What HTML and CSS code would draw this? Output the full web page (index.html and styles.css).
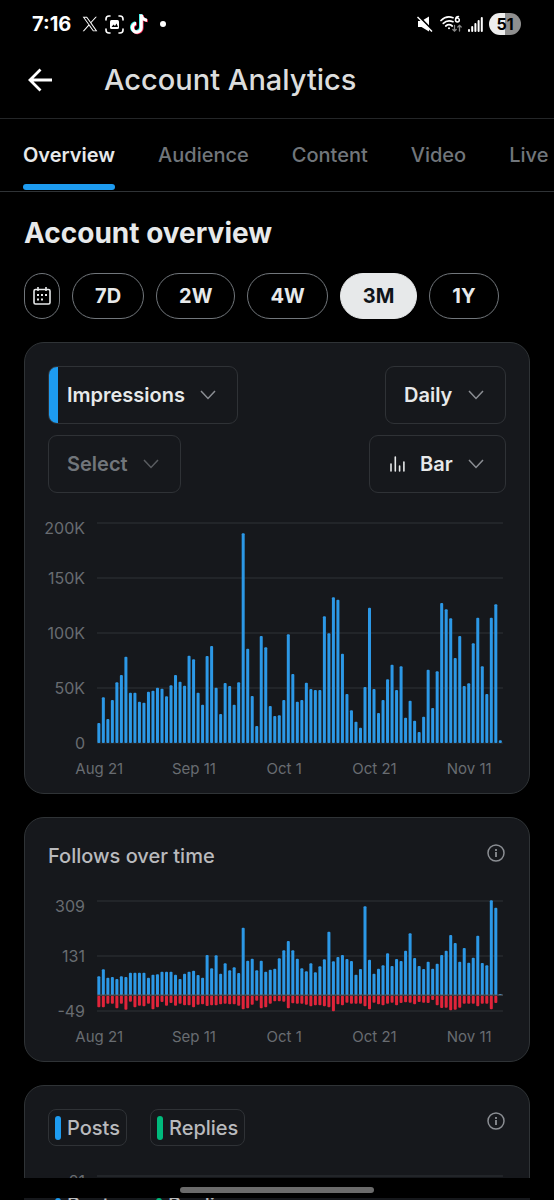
FILE: index.html
```html
<!DOCTYPE html>
<html lang="en">
<head>
<meta charset="utf-8">
<meta name="viewport" content="width=device-width, initial-scale=1">
<title>Account Analytics</title>
<link rel="stylesheet" href="styles.css">
</head>
<body>
<div class="status">
  <span class="clock">7:16</span>
  <svg class="status-x" width="16" height="16" viewBox="0 0 24 24" fill="#fff"><path d="M14.1 10.3 22.3 1h-2l-7.100 8.100L7.500 1H1l8.600 12.200L1 23h2l7.500-8.500 6 8.500H23zM11.400 13.300l-.9-1.200L3.700 2.500h3l5.600 7.800.9 1.200 7.200 10.100h-3z"/></svg>
  <svg class="status-shot" width="19" height="19" viewBox="0 0 19 19" fill="none" stroke="#fff" stroke-width="1.600" stroke-linecap="round"><path d="M1 5V4a3 3 0 0 1 3-3h1M14 1h1a3 3 0 0 1 3 3v1M18 14v1a3 3 0 0 1-3 3h-1M5 18H4a3 3 0 0 1-3-3v-1"/><rect x="5" y="5" width="9" height="9" rx="1.500" fill="#fff" stroke="none"/><path d="M6.500 12 8.500 9.500l1.500 1.500 1.500-2.500 1.500 3.500z" fill="#000" stroke="none"/></svg>
  <svg class="status-tt" width="18" height="21" viewBox="0 0 18 21"><path fill="#25f4ee" d="M9 0h3c.2 2.500 1.700 4 4.200 4.200v3C14.500 7.200 13 6.600 12 5.800v7.400a6 6 0 1 1-6.800-6v3.200a2.900 2.900 0 1 0 3.800 2.800z"/><path fill="#fe2c55" d="M10.600 1h3c.2 2.500 1.700 4 4.200 4.200v3c-1.700 0-3.200-.6-4.200-1.400v7.400a6 6 0 1 1-6.800-6v3.200a2.900 2.900 0 1 0 3.800 2.800z"/><path fill="#fff" d="M9.800.5h3c.2 2.500 1.700 4 4.200 4.200v3c-1.700 0-3.200-.6-4.200-1.400v7.400a6 6 0 1 1-6.800-6v3.200a2.900 2.900 0 1 0 3.800 2.800z"/></svg>
  <span class="dot"></span>
  <svg class="status-mute" width="16" height="16" viewBox="0 0 16 16"><path fill="#fff" d="M1 5h3.500L12 .500v15L4.500 11H1z"/><path d="M1.500 0 16 15" stroke="#000" stroke-width="2"/><path d="M.5 1 15 15.500" stroke="#fff" stroke-width="1.500"/></svg>
  <svg class="status-wifi" width="23" height="18" viewBox="0 0 23 18" fill="none" stroke="#fff" stroke-width="1.700" stroke-linecap="round"><path d="M1 5.500C4.500 2 9 1.300 13 2.700M3.300 8.300C6 5.800 9.500 5.300 13 6.700M5.800 11c2-1.600 4.400-1.600 6.400 0"/><circle cx="9" cy="13.200" r="1" fill="#fff" stroke="none"/><path stroke-width="1.500" d="M18.500 1.500c-2 0-3 1.500-3 3.500a1.900 1.900 0 1 0 1.900-1.900c-1 0-1.900.6-1.900 1.900"/><path stroke="#888" stroke-width="1.300" d="M14.500 10.500v5.500M12.800 14.500l1.700 1.700 1.700-1.700M19.500 16v-5.500M17.800 12l1.700-1.700 1.700 1.700"/></svg>
  <svg class="status-cell" width="15" height="15" viewBox="0 0 15 15" fill="#fff"><rect y="12" width="2" height="3" rx="1"/><rect x="3.200" y="9" width="2" height="6" rx="1"/><rect x="6.400" y="6" width="2" height="9" rx="1"/><rect x="9.600" y="3" width="2" height="12" rx="1"/><rect x="12.800" width="2" height="15" rx="1"/></svg>
  <span class="battery">51</span>
</div>

<header class="topbar">
  <button class="back" aria-label="Back"><svg width="24" height="24" viewBox="0 0 24 24" fill="none" stroke="#fff" stroke-width="2.800"><path d="M12.500 1.500 2 12l10.500 10.500M2 12h22"/></svg></button>
  <h1 class="title">Account Analytics</h1>
</header>

<nav class="tabs">
  <a class="tab active" href="#overview">Overview</a>
  <a class="tab" href="#audience">Audience</a>
  <a class="tab" href="#content">Content</a>
  <a class="tab" href="#video">Video</a>
  <a class="tab" href="#live">Live</a>
</nav>

<main class="content" id="overview">
  <h2 class="heading">Account overview</h2>
  <div class="ranges">
    <button class="pill date" aria-label="Pick dates"><svg width="18" height="18" viewBox="0 0 18 18" fill="none" stroke="#e7e9ea" stroke-width="1.600"><rect x="1" y="2.500" width="16" height="14.500" rx="1.500"/><path d="M5 0v4M13 0v4"/><g fill="#e7e9ea" stroke="none"><rect x="8" y="7" width="2" height="2"/><rect x="12" y="7" width="2" height="2"/><rect x="4" y="7" width="2" height="2"/><rect x="4" y="11.500" width="2" height="2"/><rect x="8" y="11.500" width="2" height="2"/></g></svg></button>
    <button class="pill">7D</button>
    <button class="pill">2W</button>
    <button class="pill">4W</button>
    <button class="pill selected">3M</button>
    <button class="pill">1Y</button>
  </div>

  <section class="card">
    <div class="controls">
      <label class="picker accent"><select aria-label="Primary metric"><option>Impressions</option></select><svg class="chev" width="16" height="10" viewBox="0 0 16 10"><path d="m1 1 7 7.500L15 1"/></svg></label>
      <label class="picker"><select aria-label="Interval"><option>Daily</option></select><svg class="chev" width="16" height="10" viewBox="0 0 16 10"><path d="m1 1 7 7.500L15 1"/></svg></label>
    </div>
    <div class="controls">
      <label class="picker muted"><select aria-label="Second metric"><option>Select</option></select><svg class="chev" width="16" height="10" viewBox="0 0 16 10"><path d="m1 1 7 7.500L15 1"/></svg></label>
      <label class="picker kind"><svg width="15" height="16" viewBox="0 0 15 16" stroke="#e7e9ea" stroke-width="1.600" stroke-linecap="round"><path d="M1 8v7M5.300 1v14M9.600 10v5M13.900 6v9"/></svg><select aria-label="Chart type"><option>Bar</option></select><svg class="chev" width="16" height="10" viewBox="0 0 16 10"><path d="m1 1 7 7.500L15 1"/></svg></label>
    </div>
    <div class="chart">
      <div class="yaxis"><span>200K</span><span>150K</span><span>100K</span><span>50K</span><span>0</span></div>
      <svg class="plot tall" id="impressions" viewBox="0 0 1215 660" preserveAspectRatio="none"></svg>
      <div class="xaxis"><span class="d0">Aug 21</span><span class="d21">Sep 11</span><span class="d41">Oct 1</span><span class="d61">Oct 21</span><span class="d82">Nov 11</span></div>
    </div>
  </section>

  <section class="card">
    <div class="card-head">
      <h3 class="card-title">Follows over time</h3>
      <button class="info" aria-label="About follows"><svg width="18" height="18" viewBox="0 0 18 18" fill="none" stroke="#8b8e93" stroke-width="1.500"><circle cx="9" cy="9" r="8"/><path d="M9 8v5M9 5v2" stroke-width="1.800"/></svg></button>
    </div>
    <div class="chart">
      <div class="yaxis"><span>309</span><span>131</span><span>-49</span></div>
      <svg class="plot short" id="follows" viewBox="0 0 1215 330" preserveAspectRatio="none"></svg>
      <div class="xaxis"><span class="d0">Aug 21</span><span class="d21">Sep 11</span><span class="d41">Oct 1</span><span class="d61">Oct 21</span><span class="d82">Nov 11</span></div>
    </div>
  </section>

  <section class="card">
    <div class="card-head legend">
      <span class="chip"><i class="swatch blue"></i>Posts</span>
      <span class="chip"><i class="swatch green"></i>Replies</span>
      <button class="info" aria-label="About posts and replies"><svg width="18" height="18" viewBox="0 0 18 18" fill="none" stroke="#8b8e93" stroke-width="1.500"><circle cx="9" cy="9" r="8"/><path d="M9 8v5M9 5v2" stroke-width="1.800"/></svg></button>
    </div>
    <div class="chart">
      <div class="yaxis"><span>21</span></div>
      <svg class="plot short" id="posts" viewBox="0 0 1215 330" preserveAspectRatio="none"></svg>
    </div>
  </section>
</main>

<div class="gesture"><span class="handle"></span></div>
<div class="under" aria-hidden="true">
  <div class="under-row"><i class="swatch blue"></i><span>Posts</span><i class="swatch green"></i><span>Replies</span></div>
</div>
<script src="charts.js"></script>
</body>
</html>
```
FILE: styles.css
```css
* { box-sizing: border-box; }
body {
  margin: 0;
  height: 100vh;
  display: flex;
  flex-direction: column;
  overflow: hidden;
  background: #000;
  color: #e7e9ea;
  font-family: Inter, "Liberation Sans", sans-serif;
  font-size: 20px;
}
button, select { font: inherit; color: inherit; background: none; border: 0; padding: 0; margin: 0; }
h1, h2, h3 { margin: 0; }
svg { display: block; flex: none; }

.status { flex: none; display: flex; align-items: center; height: 48px; padding: 0 33px 0 32px; }
.clock { font-size: 20px; font-weight: 700; color: #fff; margin-right: 11px; }
.status-shot { margin-left: 7px; }
.status-tt { margin-left: 6px; }
.dot { width: 6px; height: 6px; border-radius: 50%; background: #fff; margin-left: 12px; }
.status-mute { margin-left: auto; }
.status-wifi { margin-left: 7px; }
.status-cell { margin: 0 6px 0 5px; }
.battery {
  width: 32px; height: 22px; border-radius: 11px;
  background: linear-gradient(90deg, #eee 51%, #8f8f8f 51%);
  color: #000; font-size: 16px; font-weight: 700; line-height: 22px; text-align: center;
}

.topbar { flex: none; display: flex; align-items: center; height: 71px; padding: 0 28px 7px; border-bottom: 1px solid #242628; }
.back { width: 26px; height: 26px; }
.title { margin-left: 50px; font-size: 29px; font-weight: 500; color: #dcdddd; }

.tabs { flex: none; display: flex; gap: 43px; height: 73px; padding: 0 0 0 23px; border-bottom: 1px solid #2f3336; overflow: hidden; }
.tab {
  display: flex; align-items: center;
  color: #71767b; font-weight: 500; text-decoration: none; position: relative;
}
.tab.active { color: #e7e9ea; font-weight: 600; }
.tab.active::after { content: ""; position: absolute; left: 0; right: 0; bottom: 1px; height: 6px; border-radius: 3px; background: #1d9bf0; }

.content { flex: 1; min-height: 0; overflow: hidden; padding: 24px; }
.heading { font-size: 28px; font-weight: 700; line-height: 34px; }
.ranges { display: flex; gap: 12px; margin-top: 23px; }
.pill { height: 46px; padding: 0 22px; border: 1px solid #71767b; border-radius: 23px; font-weight: 700; }
.pill.date { padding: 0 8px; }
.pill.selected { background: #e7e9ea; border-color: #e7e9ea; color: #0f1419; }

.card { margin-top: 23px; padding: 23px; border: 1px solid #2f3336; border-radius: 20px; background: #16181c; }
.controls { display: flex; justify-content: space-between; margin-bottom: 11px; }
.picker {
  display: flex; align-items: center; gap: 15px; height: 58px; padding: 0 21px 0 18px;
  border: 1px solid #2f3236; border-radius: 9px; font-weight: 600;
}
.picker select { appearance: none; outline: 0; }
.picker.accent { background: linear-gradient(90deg, #1d9bf0 9px, transparent 9px); }
.picker.muted { color: #71767b; }
.picker.kind { padding-left: 20px; }
.chev { fill: none; stroke: #8b8e93; stroke-width: 1.500; }
.muted .chev { stroke: #5a5d61; }

.chart {
  display: grid; grid-template-columns: 37px 1fr; column-gap: 12px;
  margin-top: 30px; padding-right: 3px;
  font-size: 16px; color: #686c71;
}
.yaxis { display: flex; flex-direction: column; justify-content: space-between; align-items: flex-end; }
.yaxis span { height: 0; line-height: 0; }
.yaxis span:first-child { line-height: 10px; }
.plot { width: 100%; overflow: visible; }
.plot.tall { height: 220px; }
.plot.short { height: 110px; }
.grid { stroke: #2f3236; stroke-width: 1; vector-effect: non-scaling-stroke; }
.zero { stroke: #62666b; stroke-width: 1; vector-effect: non-scaling-stroke; }
.up { fill: #2c98e6; }
.down { fill: #e0243a; }
.xaxis { grid-column: 2; display: grid; grid-template-columns: repeat(90, minmax(0, 1fr)); margin-top: 16px; line-height: 20px; margin-bottom: -9px; font-size: 15px; }
.xaxis span { justify-self: center; white-space: nowrap; grid-row: 1; }
.d0 { grid-column: 1; }
.d21 { grid-column: 22; }
.d41 { grid-column: 42; }
.d61 { grid-column: 62; }
.d82 { grid-column: 83; }

.card-head { display: flex; justify-content: space-between; align-items: flex-start; }
.card-title { font-size: 20px; font-weight: 500; line-height: 30px; color: #b9babd; }
.info { height: 18px; margin: 3px 1px 0 0; }
.legend { justify-content: flex-start; gap: 23px; }
.legend .info { margin-left: auto; }
.chip {
  display: flex; align-items: center; gap: 6px; height: 37px; padding: 0 6px;
  border: 1px solid #2f3236; border-radius: 8px; font-weight: 500; color: #b9babd;
}
.swatch { width: 6px; height: 24px; border-radius: 3px; }
.blue { background: #1d9bf0; }
.green { background: #00ba7c; }

.gesture { flex: none; display: flex; justify-content: center; align-items: center; height: 20px; background: #000; padding-top: 3px; }
.handle { width: 35%; height: 6px; border-radius: 3px; background: #6b6b6b; }
.under { flex: none; height: 2px; margin: 0 24px; padding: 0 31px; overflow: hidden; background: #16181c; }
.under-row { display: flex; gap: 6px; line-height: 14px; font-weight: 500; color: #b9babd; }
.under-row .green { margin-left: 30px; }
```
FILE: charts.js
```js
const NS = "http://www.w3.org/2000/svg";
const STEP = 13.5;
const BAR = 9;

function add(svg, tag, attrs) {
  const el = document.createElementNS(NS, tag);
  for (const key in attrs) el.setAttribute(key, attrs[key]);
  svg.append(el);
}

function line(svg, y, cls) {
  add(svg, "line", { x1: 0, x2: 1215, y1: y, y2: y, class: cls });
}

function bar(svg, i, y, height, cls) {
  add(svg, "rect", { x: i * STEP + 1, y, width: BAR, height, rx: 3, class: cls });
}

/* Heights are in plot units: 660 units is 200K impressions. */
const impressions = [
  60, 137, 72, 129, 182, 204, 259, 151, 151, 124, 121, 154, 157, 166, 163, 140, 173, 204, 184, 172,
  262, 251, 151, 115, 261, 291, 166, 87, 180, 171, 115, 182, 629, 283, 141, 51, 321, 287, 111, 81,
  83, 129, 326, 207, 124, 129, 181, 162, 159, 159, 380, 329, 437, 430, 268, 147, 98, 64, 46, 168,
  406, 162, 90, 129, 191, 235, 159, 230, 76, 127, 67, 33, 79, 220, 105, 215, 420, 401, 374, 255,
  321, 171, 179, 299, 376, 230, 147, 376, 416, 8
];
const impressionPlot = document.getElementById("impressions");
[0, 165, 330, 495, 660].forEach(y => line(impressionPlot, y, "grid"));
impressions.forEach((h, i) => bar(impressionPlot, i, 660 - h, h, "up"));

/* Follows rise above the zero line, unfollows hang below it. */
const follows = [
  56, 77, 52, 54, 48, 56, 54, 67, 67, 67, 67, 52, 61, 62, 70, 70, 70, 61, 48, 64,
  70, 73, 60, 52, 120, 80, 119, 64, 95, 74, 83, 66, 202, 103, 109, 74, 103, 70, 76, 79,
  110, 134, 162, 134, 109, 80, 71, 95, 68, 86, 107, 190, 101, 114, 120, 108, 102, 61, 78, 266,
  106, 64, 79, 89, 125, 87, 108, 102, 133, 185, 111, 87, 78, 100, 79, 94, 120, 133, 180, 156,
  100, 141, 97, 112, 178, 96, 89, 284, 262, 3
];
const unfollows = [
  35, 35, 24, 24, 38, 24, 42, 18, 35, 30, 32, 24, 41, 35, 19, 30, 22, 30, 24, 29,
  29, 35, 27, 26, 31, 29, 29, 26, 24, 26, 26, 30, 41, 38, 27, 15, 38, 35, 24, 17,
  17, 18, 38, 23, 24, 24, 27, 32, 29, 29, 32, 35, 47, 26, 29, 21, 24, 24, 24, 32,
  41, 21, 26, 29, 24, 21, 29, 22, 20, 21, 26, 19, 21, 22, 13, 29, 37, 36, 44, 42,
  36, 24, 24, 24, 32, 24, 24, 41, 22
];
const followPlot = document.getElementById("follows");
[0, 165, 330].forEach(y => line(followPlot, y, "grid"));
follows.forEach((h, i) => bar(followPlot, i, 282 - h, h, "up"));
unfollows.forEach((h, i) => bar(followPlot, i, 284, h, "down"));
line(followPlot, 282, "zero");

line(document.getElementById("posts"), 0, "grid");
```
